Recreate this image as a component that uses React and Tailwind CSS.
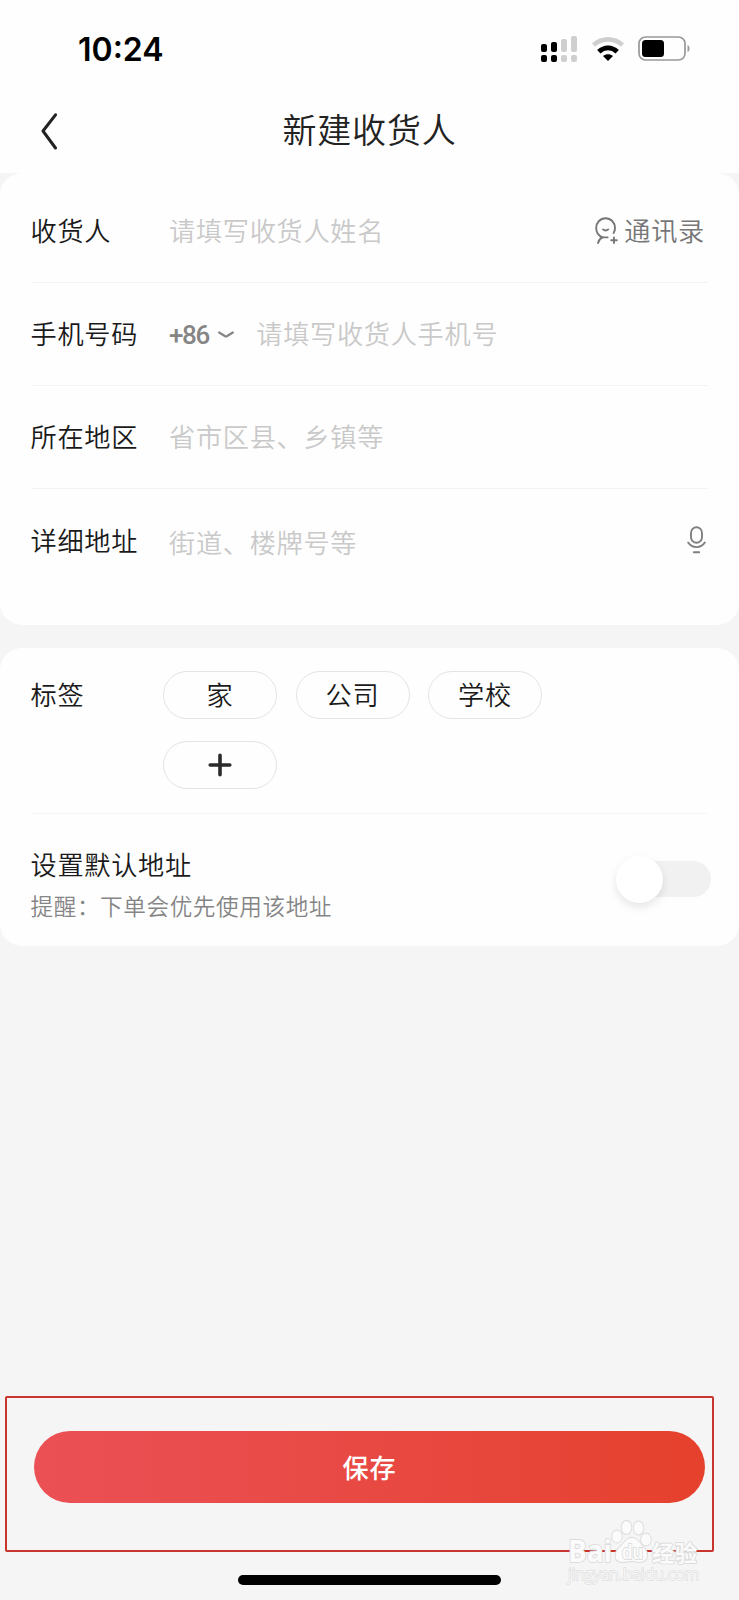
import React, { useState } from 'react';

const TAGS = ['家', '公司', '学校'];

function SignalIcon() {
  return (
    <svg width="37" height="26" viewBox="0 0 37 26" className="shrink-0">
      <g fill="#000">
        <rect x="0" y="8" width="6" height="8" rx="2" />
        <rect x="10" y="6" width="6" height="10" rx="2" />
        <rect x="0" y="19" width="6" height="7" rx="2" />
        <rect x="10" y="19" width="6" height="7" rx="2" />
      </g>
      <g fill="#cfcfcf">
        <rect x="20" y="3" width="6" height="13" rx="2" />
        <rect x="30" y="0" width="6" height="16" rx="2" />
        <rect x="20" y="19" width="6" height="7" rx="2" />
        <rect x="30" y="19" width="6" height="7" rx="2" />
      </g>
    </svg>
  );
}

function WifiIcon() {
  return (
    <svg width="32" height="24" viewBox="0 0 32 24" fill="none" className="shrink-0">
      <path d="M1.500 8 C10 0.5 22 0.5 30.500 8" stroke="#cfcfcf" strokeWidth="4.6" />
      <path d="M6.8 14.8 C12.3 9.6 19.7 9.6 25.2 14.8" stroke="#000" strokeWidth="4.800" />
      <path d="M16 24 L11 19 C14 16.7 18 16.7 21 19 Z" fill="#000" />
    </svg>
  );
}

function BatteryIcon() {
  return (
    <svg width="53" height="26" viewBox="0 0 53 26" fill="none" className="shrink-0">
      <rect x="1" y="1" width="46" height="23" rx="6.5" stroke="#999" strokeWidth="1.7" />
      <rect x="4" y="4" width="22" height="17" rx="3.5" fill="#000" />
      <path d="M49.5 9 C52.3 10 52.3 15 49.5 16 Z" fill="#999" />
    </svg>
  );
}

function ContactIcon() {
  return (
    <svg width="23" height="28" viewBox="0 0 23 28" fill="none" stroke="#777" strokeWidth="1.9" strokeLinecap="round">
      <path d="M3 26 C3.6 23.4 5 21.6 7.4 20.4 C3.6 18.8 1.2 15.4 1.2 11 C1.2 5.4 5.4 1.2 10.6 1.2 C15.8 1.2 20 5.4 20 11 C20 13 19.4 14.8 18.6 16" />
      <path d="M7.4 20.4 H12.6" />
      <path d="M8 12.4 C9.4 13.8 11.8 13.8 13.2 12.4" />
      <path d="M19 20.4 V26 M16.2 23.2 H21.8" />
    </svg>
  );
}

function MicIcon() {
  return (
    <svg width="19" height="28" viewBox="0 0 19 28" fill="none" stroke="#808080" strokeWidth="1.9" strokeLinecap="round">
      <rect x="4" y="1.2" width="11" height="15.6" rx="5.5" />
      <path d="M1.2 16.6 C5 22.6 14 22.6 17.8 16.6" />
      <path d="M6.8 26.3 H12.2" />
    </svg>
  );
}

function Row({ label, children, last }) {
  return (
    <div className={last ? 'flex h-[103px] items-center' : 'flex h-[103px] items-center border-b border-[#f2f2f2]'}>
      <span className="w-[138.5px] shrink-0 pb-[2px]">{label}</span>
      {children}
    </div>
  );
}

function Watermark() {
  return (
    <svg width="150" height="78" viewBox="0 0 150 78" className="absolute left-[565px] top-[1518px] pointer-events-none">
      <g fill="#fbfbfb" stroke="#dcdcdc" strokeWidth="1.8" paintOrder="stroke" strokeLinejoin="round">
        <text x="3" y="43.5" letterSpacing="0" fontFamily="Open Sans, sans-serif" fontWeight="700" fontSize="30" textLength="44" lengthAdjust="spacingAndGlyphs">Bai</text>
        <ellipse cx="52" cy="18.500" rx="4.800" ry="6" />
        <ellipse cx="61.500" cy="9.500" rx="4.800" ry="6.500" />
        <ellipse cx="73.500" cy="10" rx="4.800" ry="6.500" />
        <ellipse cx="81" cy="21.500" rx="4.800" ry="6" />
        <path d="M67 20 C73 20 75 26 79 30 C84 35 83 44 75 44 C71 44 70 43 67 43 C63 43 61 44 57 44 C49 44 49 35 54 30 C59 26 61 20 67 20 Z" />
        <text x="57" y="41" letterSpacing="0" fontFamily="Liberation Sans, sans-serif" fontWeight="700" fontSize="20" textLength="21" lengthAdjust="spacingAndGlyphs">du</text>
        <text x="87" y="43" letterSpacing="0" fontFamily="Noto Sans CJK SC, sans-serif" fontWeight="700" fontSize="22" textLength="45">经验</text>
      </g>
      <text x="3" y="62" letterSpacing="0" fontFamily="Open Sans, sans-serif" fontSize="15.500" textLength="131" lengthAdjust="spacingAndGlyphs" fill="#fdfdfd" stroke="#dedede" strokeWidth="1.4" paintOrder="stroke">jingyan.baidu.com</text>
    </svg>
  );
}

export default function App() {
  const [isDefault, setIsDefault] = useState(false);

  return (
    <div className="relative flex h-[1600px] w-[739px] flex-col overflow-hidden bg-[#f5f5f5] font-['Noto_Sans_CJK_SC',sans-serif] font-[350] text-[26.2px] leading-[40px] tracking-[0.7px] text-[#1a1a1a]">
      <header className="h-[173px] shrink-0 bg-[#fefefe]">
        {/* Status bar */}
        <div className="flex h-[98px] items-center justify-between pl-[78px] pr-[48px]">
          <span className="pt-[2px] font-['Inter',sans-serif] text-[32px] font-semibold tracking-normal text-black">10:24</span>
          <div className="flex items-center">
            <SignalIcon />
            <div className="ml-[14px]"><WifiIcon /></div>
            <div className="ml-[14px]"><BatteryIcon /></div>
          </div>
        </div>
        {/* Title bar */}
        <div className="grid h-[66px] grid-cols-[100px_1fr_100px] items-center">
          <button type="button" className="pl-[41px]">
            <svg width="17" height="37" viewBox="0 0 17 37" fill="none" stroke="#222" strokeWidth="3" strokeLinecap="round" strokeLinejoin="round">
              <path d="M14.500 1.800 L2 18 L14.500 35" />
            </svg>
          </button>
          <h1 className="pb-[4px] text-center text-[34px] tracking-[0.8px] text-[#222]">新建收货人</h1>
        </div>
      </header>

      {/* Address form */}
      <section className="h-[452px] shrink-0 rounded-[22px] bg-[#fefefe] pl-[30.5px] pr-[31px] pt-[7px]">
        <Row label="收货人">
          <span className="flex-1 pb-[2px] text-[#c9c9c9]">请填写收货人姓名</span>
          <button type="button" className="flex items-center gap-[6px] pr-[3px] text-[#777]">
            <ContactIcon />
            <span className="pb-[2px]">通讯录</span>
          </button>
        </Row>
        <Row label="手机号码">
          <span className="pt-[2px] font-['Roboto',sans-serif] text-[26px] font-medium tracking-[-1.4px] text-[#858585]">+86</span>
          <svg width="16" height="8" viewBox="0 0 16 8" fill="none" stroke="#858585" strokeWidth="2.200" strokeLinecap="round" className="ml-[9px] mt-[2px]">
            <path d="M1.200 1.500 L6.800 5 Q8 5.700 9.200 5 L14.800 1.500" />
          </svg>
          <span className="ml-[22.5px] pb-[2px] text-[#c9c9c9]">请填写收货人手机号</span>
        </Row>
        <Row label="所在地区">
          <span className="pb-[2px] text-[#c9c9c9]">省市区县、乡镇等</span>
        </Row>
        <Row label="详细地址" last>
          <span className="flex-1 pt-[3px] text-[#c9c9c9]">街道、楼牌号等</span>
          <button type="button" className="pb-[2px] pr-[2px]"><MicIcon /></button>
        </Row>
      </section>

      {/* Tags and default switch */}
      <section className="mt-[23px] h-[298px] shrink-0 rounded-[22px] bg-[#fefefe] pl-[30.5px] pr-[31px] pt-[23px]">
        <div className="flex h-[143px] items-start border-b border-[#f6f6f6]">
          <span className="w-[132.5px] shrink-0 pt-[3px]">标签</span>
          <div className="flex w-[400px] flex-wrap gap-x-[18.5px] gap-y-[22px]">
            {TAGS.map((tag) => (
              <button key={tag} type="button" className="flex h-[48px] w-[114px] items-center justify-center rounded-full border border-[#e4e4e4] pb-[2px]">
                {tag}
              </button>
            ))}
            <button type="button" className="flex h-[48px] w-[114px] items-center justify-center rounded-full border border-[#e4e4e4]">
              <svg width="24" height="24" viewBox="0 0 24 24" fill="none" stroke="#2b2b2b" strokeWidth="3.600" strokeLinecap="round">
                <path d="M12 2.200 V21.800 M2.200 12 H21.800" />
              </svg>
            </button>
          </div>
        </div>
        <div className="flex items-center justify-between pt-[30px]">
          <div>
            <p>设置默认地址</p>
            <p className="mt-[2px] text-[22.6px] tracking-[0.6px] text-[#858585]">提醒：下单会优先使用该地址</p>
          </div>
          <button
            type="button"
            onClick={() => setIsDefault(!isDefault)}
            className="mr-[-3px] mt-[-12px] flex h-[36px] w-[95px] items-center rounded-full bg-gradient-to-r from-transparent from-20% to-[#f1f1f1] to-20%"
          >
            <span className={isDefault ? 'ml-[47px] size-[47px] rounded-full bg-white shadow-[0_4px_10px_rgba(0,0,0,0.1)]' : 'size-[47px] shrink-0 rounded-full bg-white shadow-[0_4px_10px_rgba(0,0,0,0.1)]'}></span>
          </button>
        </div>
      </section>

      {/* Bottom actions */}
      <footer className="mt-auto flex flex-col items-center">
        <button type="button" className="h-[72px] w-[671px] rounded-full bg-gradient-to-r from-[#eb5055] to-[#e5412c] pb-[1px] font-medium text-white">
          保存
        </button>
        <div className="mb-[15px] mt-[72px] h-[10px] w-[263px] rounded-full bg-black"></div>
      </footer>

      <div className="absolute left-[5px] top-[1396px] h-[156px] w-[709px] rounded-[2px] border-2 border-[#c8352c] pointer-events-none"></div>
      <Watermark />
    </div>
  );
}
